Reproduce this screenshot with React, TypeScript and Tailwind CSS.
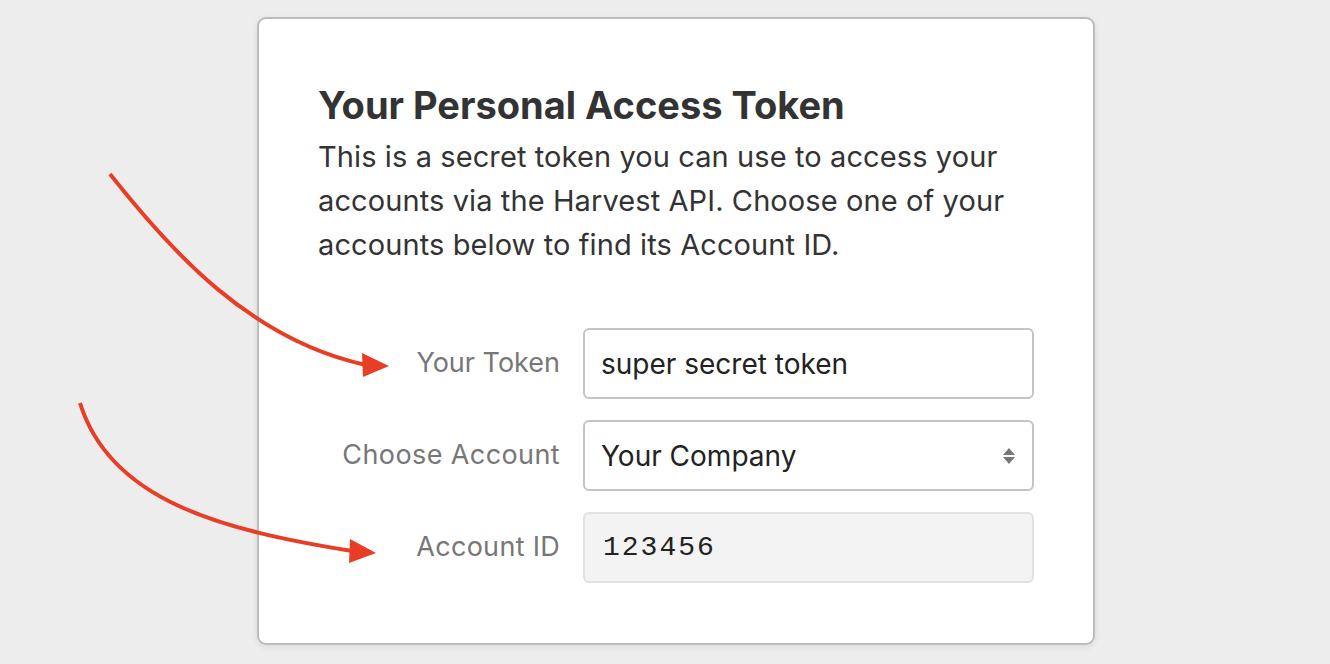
import React from "react";

export default function App() {
  return (
    <div className="relative w-[1330px] h-[664px] overflow-hidden bg-[#ededed]" style={{ fontFamily: "Inter, 'Noto Sans', sans-serif" }}>
      <div className="absolute left-[257px] top-[17px] w-[838px] h-[628px] rounded-[9px] border-2 border-[#bcbcbc] bg-white shadow-[0_2px_6px_rgba(0,0,0,0.08)]">
        <div className="pl-[59px] pr-[59px] pt-[62px]">
          <h1 className="text-[38px] leading-[48px] font-bold text-[#333]">Your Personal Access Token</h1>
          <p className="mt-[6px] text-[29px] leading-[44px] text-[#333] w-[716px] tracking-[0.1px]">
            This is a secret token you can use to access your accounts via the Harvest API. Choose one of your accounts below to find its Account ID.
          </p>
          <div className="mt-[61px] flex flex-col gap-[21px]">
            <div className="flex items-center gap-[23px]">
              <div className="w-[242px] text-right text-[27px] text-[#777]">Your Token</div>
              <div className="w-[451px] h-[71px] rounded-[6px] border-2 border-[#c4c4c4] bg-white flex items-center pl-[16px] text-[28px] text-[#222]">super secret token</div>
            </div>
            <div className="flex items-center gap-[23px]">
              <div className="w-[242px] text-right text-[27px] text-[#777] tracking-[0.4px]">Choose Account</div>
              <div className="w-[451px] h-[71px] rounded-[6px] border-2 border-[#c4c4c4] bg-white flex items-center justify-between pl-[16px] pr-[16px] text-[28px] text-[#222]">
                <span>Your Company</span>
                <svg width="14" height="20" viewBox="0 0 14 20">
                  <path d="M7 2 L13 9 L1 9 Z" fill="#777" />
                  <path d="M1 11 L13 11 L7 18 Z" fill="#777" />
                </svg>
              </div>
            </div>
            <div className="flex items-center gap-[23px]">
              <div className="w-[242px] text-right text-[27px] text-[#777] tracking-[0.3px]">Account ID</div>
              <div className="w-[451px] h-[71px] rounded-[6px] border-2 border-[#e2e2e2] bg-[#f3f3f3] flex items-center pl-[18px] text-[28px] tracking-[2px] text-[#222]" style={{ fontFamily: "'Liberation Mono', monospace" }}>123456</div>
            </div>
          </div>
        </div>
      </div>
      <svg className="absolute left-0 top-0 pointer-events-none" width="1330" height="664" viewBox="0 0 1330 664">
        <path d="M110 174 C 170 250, 250 340, 366 365" fill="none" stroke="#e83e26" strokeWidth="4" />
        <path d="M362 353 L389 366 L363 377 Z" fill="#e83e26" />
        <path d="M80 403 C 110 500, 220 530, 352 551" fill="none" stroke="#e83e26" strokeWidth="4" />
        <path d="M350 539 L376 553 L349 563 Z" fill="#e83e26" />
      </svg>
    </div>
  );
}
